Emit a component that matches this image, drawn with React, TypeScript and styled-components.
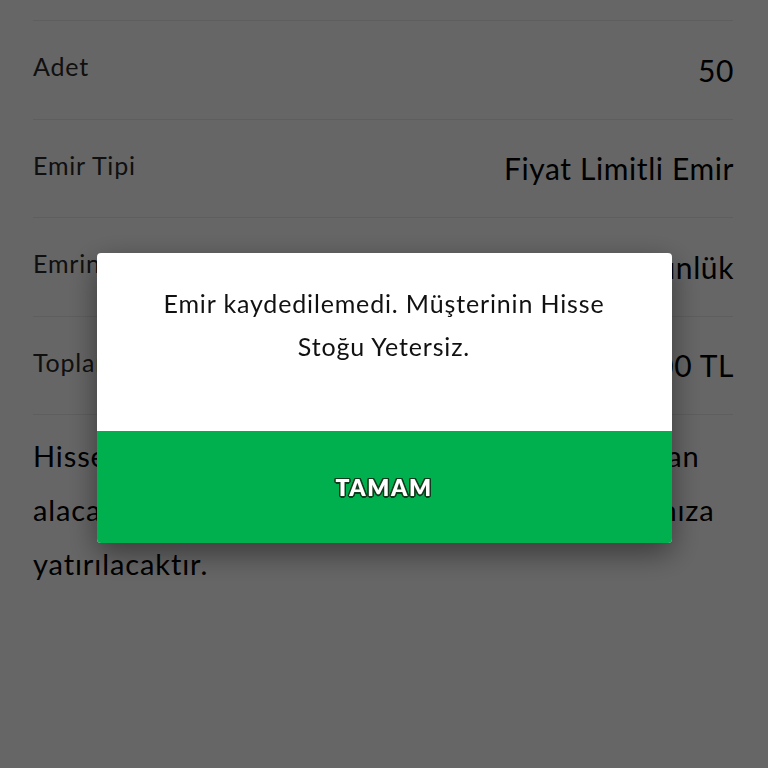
import styled, { createGlobalStyle } from 'styled-components'

const GlobalStyle = createGlobalStyle`
  html, body {
    margin: 0;
    padding: 0;
    background: #ffffff;
    font-family: Lato, "Open Sans", "Noto Sans", sans-serif;
    color: #000000;
  }
  * {
    box-sizing: border-box;
  }
`

const details = [
  { label: 'Adet', value: '50' },
  { label: 'Emir Tipi', value: 'Fiyat Limitli Emir' },
  { label: 'Emrin Geçerlilik Süresi', value: 'Günlük' },
  { label: 'Toplam Tutar', value: '2.500,00 TL' },
]

const App = () => {
  return (
    <>
      <GlobalStyle />
      <Page>
        {details.map((d) => (
          <DetailRow key={d.label}>
            <Label>{d.label}</Label>
            <Value>{d.value}</Value>
          </DetailRow>
        ))}
        <Note>
          <span>Hisse satış işleminizden T+2 valörlü olarak oluşan</span>
          <span>alacağınız tutar, T+2 iş günü sonrasında hesabınıza</span>
          <span>yatırılacaktır.</span>
        </Note>
      </Page>

      <Overlay>
        <Dialog role="alertdialog">
          <Message>
            Emir kaydedilemedi. Müşterinin Hisse
            <br />
            Stoğu Yetersiz.
          </Message>
          <OkButton type="button">TAMAM</OkButton>
        </Dialog>
      </Overlay>
    </>
  )
}

export default App

const Page = styled.div`
  padding: 20px 35px 0 33px;
  min-height: 768px;
`

const DetailRow = styled.div`
  display: flex;
  justify-content: space-between;
  align-items: center;
  height: 98.5px;
  border-top: 1px solid #ebebeb;
`

const Label = styled.span`
  font-size: 25px;
  color: #2a2a2a;
  letter-spacing: 0.8px;
  margin-bottom: 7px;
`

const Value = styled.span`
  font-size: 30px;
  color: #000000;
  letter-spacing: 0.6px;
  margin-right: -1px;
`

const Note = styled.p`
  margin: 0;
  padding-top: 14px;
  border-top: 1px solid #ebebeb;
  font-size: 29px;
  line-height: 54px;
  letter-spacing: 0.9px;
  span {
    display: block;
    white-space: nowrap;
  }
`

const Overlay = styled.div`
  position: fixed;
  inset: 0;
  background: rgba(0, 0, 0, 0.6);
  display: flex;
  justify-content: center;
  align-items: flex-start;
  padding-top: 253px;
`

const Dialog = styled.div`
  width: 575px;
  background: #ffffff;
  border-radius: 4px;
  overflow: hidden;
  box-shadow: 0 10px 30px rgba(0, 0, 0, 0.45);
  display: flex;
  flex-direction: column;
`

const Message = styled.div`
  height: 178px;
  padding: 29px 30px 0;
  text-align: center;
  font-size: 25px;
  line-height: 43px;
  color: #111111;
  letter-spacing: 0.85px;
`

const OkButton = styled.button`
  height: 112px;
  width: 100%;
  border: none;
  background: #00af4e;
  color: #ffffff;
  font-family: Lato, "Open Sans", sans-serif;
  font-weight: 800;
  font-size: 23px;
  letter-spacing: 1.6px;
  text-shadow:
    -1.2px -1.2px 0 #123a1c,
    1.2px -1.2px 0 #123a1c,
    -1.2px 1.2px 0 #123a1c,
    1.2px 1.2px 0 #123a1c,
    0 1.5px 0 #123a1c,
    0 -1.5px 0 #123a1c,
    1.5px 0 0 #123a1c,
    -1.5px 0 0 #123a1c;
  cursor: pointer;
`
